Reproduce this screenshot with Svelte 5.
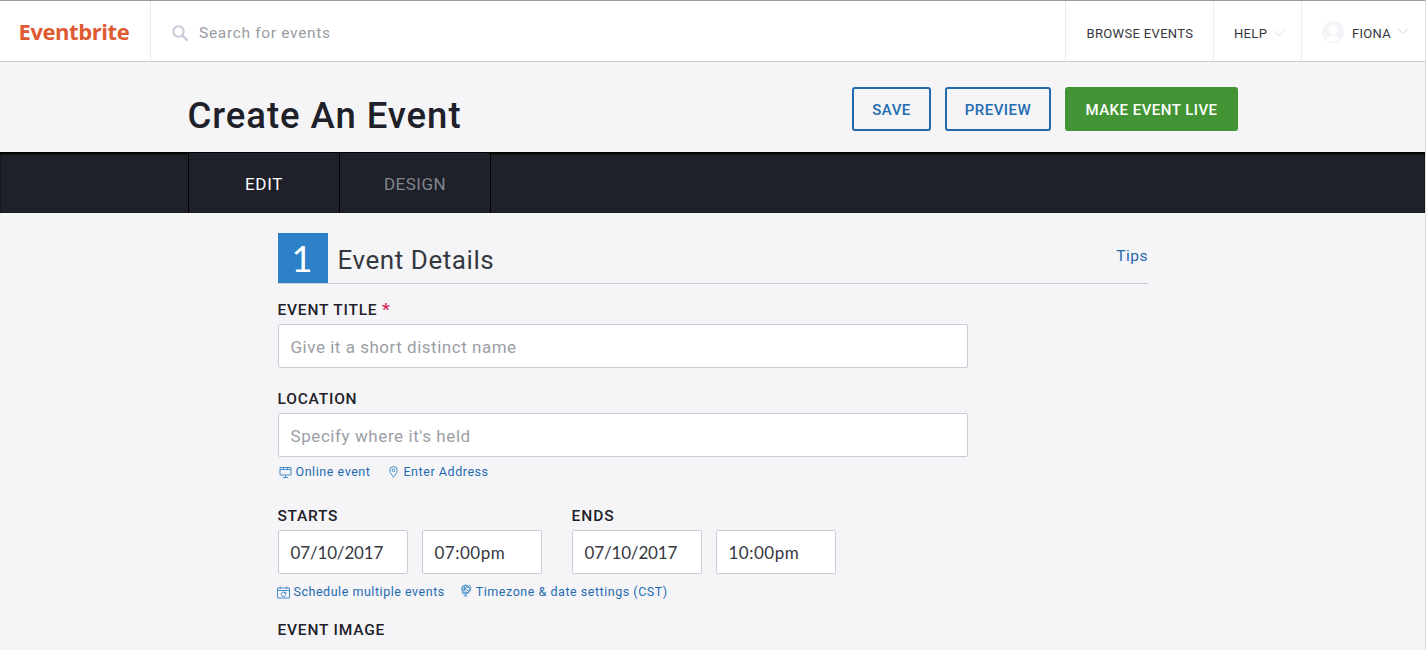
<script>
  const dates = [
    { label: 'STARTS', date: '07/10/2017', time: '07:00pm', cls: 'starts' },
    { label: 'ENDS', date: '07/10/2017', time: '10:00pm', cls: 'ends' }
  ];
</script>

<div class="page">
  <header class="topbar">
    <a class="logo" href="#home">Eventbrite</a>
    <div class="search">
      <svg width="17" height="17" viewBox="0 0 17 17" fill="none" stroke="#c9cbd9">
        <circle cx="6.5" cy="6.5" r="5.2" stroke-width="2" />
        <path d="M10.4 10.4 15.6 15.6" stroke-width="2.5" />
      </svg>
      <span>Search for events</span>
    </div>
    <a class="item browse" href="#browse"><span>BROWSE EVENTS</span></a>
    <a class="item help" href="#help">
      <span>HELP</span>
      <svg class="chev" width="12" height="7" viewBox="0 0 12 7"><path d="M1 .7 6 5.7 11 .7" /></svg>
    </a>
    <a class="item user" href="#account">
      <svg class="avatar" width="22" height="22" viewBox="0 0 22 22">
        <circle cx="11" cy="11" r="11" fill="#f4f4f8" />
        <ellipse cx="11" cy="8.8" rx="4.2" ry="4.8" fill="#fff" />
        <path d="M4.5 18.6C5.5 15.6 8 15 11 15s5.5.6 6.5 3.6C15.5 20.3 13.5 20.9 11 20.9s-4.5-.6-6.5-2.3Z" fill="#fff" />
      </svg>
      <span>FIONA</span>
      <svg class="chev" width="12" height="7" viewBox="0 0 12 7"><path d="M1 .7 6 5.7 11 .7" /></svg>
    </a>
  </header>

  <section class="title">
    <h1>Create An Event</h1>
    <button class="outline save">SAVE</button>
    <button class="outline preview">PREVIEW</button>
    <button class="live">MAKE EVENT LIVE</button>
  </section>

  <nav>
    <a class="edit" href="#edit">EDIT</a>
    <a class="design" href="#design">DESIGN</a>
  </nav>

  <main>
    <div class="heading">
      <span class="step">1</span>
      <h2>Event Details</h2>
      <a class="tips" href="#tips">Tips</a>
    </div>

    <div class="label first">EVENT TITLE <b>*</b></div>
    <div class="input wide">Give it a short distinct name</div>

    <div class="label location">LOCATION</div>
    <div class="input wide where">Specify where it's held</div>
    <div class="links">
      <a class="online" href="#online">
        <svg width="13" height="12" viewBox="0 0 13 12"><path d="M1 1.5h11v7.500H1zM1 3.500h11M6.500 9v2.500M4 11.500h5M4.500 1.500v2M8.500 1.500v2" /></svg>
        <span>Online event</span>
      </a>
      <a class="address" href="#address">
        <svg width="9" height="12" viewBox="0 0 9 12"><path d="M4.500 11.300C3.500 9.200.8 7.200.8 4.300a3.700 3.700 0 0 1 7.400 0c0 2.900-2.700 4.900-3.700 7Z" /><circle cx="4.500" cy="4.300" r="1.400" /></svg>
        <span>Enter Address</span>
      </a>
    </div>

    <div class="dates">
      {#each dates as d}
        <div>
          <div class="label {d.cls}">{d.label}</div>
          <div class="pair">
            <div class="input value date">{d.date}</div>
            <div class="input value time">{d.time}</div>
          </div>
        </div>
      {/each}
    </div>
    <div class="links when">
      <a class="schedule" href="#schedule">
        <svg width="13" height="13" viewBox="0 0 13 13"><path d="M.5 2h12v10H.5zM.5 4.500h12M3.200.5v2.500M9.800.5v2.500" /><path d="M8.600 7.300A2.300 2.300 0 1 0 8.700 9.200M8.900 5.900v1.700H7.200" /></svg>
        <span>Schedule multiple events</span>
      </a>
      <a class="zone" href="#timezone">
        <svg width="12" height="13" viewBox="0 0 12 13"><circle cx="5.500" cy="5" r="4" /><path d="M2.500 2.500 8.600 7.200M3.500 7.500C4.300 4.500 6 3 8.800 3M5.500 1.300C3.500 4 4 6.500 6.500 8.500M2 5.500c2 0 4.500-1.500 5-3.500M9.300.8c2 2.300 2 5.500-.3 7.700-1.900 1.700-5 1.900-7.300.2M5.500 9.800v1.800M3.700 12h3.600" /></svg>
        <span>Timezone &amp; date settings (CST)</span>
      </a>
    </div>

    <div class="label image">EVENT IMAGE</div>
  </main>
</div>

<style>
  :global(body) { margin: 0; background: #f5f5f8; }
  .page { box-sizing: border-box; height: 650px; overflow: hidden; border-top: 1px solid #9c9c9c; border-right: 1px solid #dcdcdf; background: #f5f5f8; font-family: Roboto, sans-serif; color: #1e2129; }
  a { text-decoration: none; }
  svg { flex: none; }
  .topbar { display: flex; height: 60px; background: #fff; border-bottom: 1px solid #c9cbd6; }
  .logo { box-sizing: border-box; width: 151px; padding-left: 18.5px; border-right: 1px solid #ebebf0; font: 700 22px/60px "Open Sans", sans-serif; letter-spacing: -.42px; color: #de5a33; }
  .search { flex: 1; display: flex; align-items: center; gap: 10px; padding: 4px 0 0 21px; font-size: 15.5px; letter-spacing: .68px; color: #9a9ba3; }
  .item { box-sizing: border-box; display: flex; align-items: center; padding: 4px 0 0 20px; border-left: 1px solid #ebebf0; font-size: 13px; color: #35373e; }
  .browse { width: 148px; padding-left: 20.5px; letter-spacing: .34px; }
  .help { width: 88px; letter-spacing: .35px; }
  .user { width: 124px; letter-spacing: .3px; }
  .user span { margin-left: 8px; }
  .chev { margin-left: 6px; fill: none; stroke: #d6d7e1; }
  .user .chev { margin-bottom: 4px; }
  .avatar { margin-bottom: 3px; }

  .title { display: flex; height: 65px; padding: 25px 187px 0 187.5px; }
  h1 { flex: 1; margin: 0; font-size: 36.5px; font-weight: 500; line-height: 57px; letter-spacing: .95px; }
  button { box-sizing: border-box; height: 44px; margin: 0 0 0 14px; padding: 2px 0 0; border-radius: 3px; font: 500 15px/20px Roboto, sans-serif; }
  .outline { border: 2px solid #2268aa; background: none; color: #226bb0; }
  .save { width: 79px; letter-spacing: .45px; }
  .preview { width: 106px; letter-spacing: .5px; }
  .live { width: 173px; border: 0; background: #439434; color: #fff; letter-spacing: .48px; }

  nav { display: flex; height: 60px; padding-left: 188px; border-top: 1px solid #000; background: #1e2129; box-shadow: inset 0 1px 2px #000; }
  nav a { box-sizing: border-box; height: 60px; width: 151px; border-right: 1px solid #000; background: #1e2129; line-height: 62px; text-align: center; font-size: 17px; font-weight: 400; }
  nav .edit { width: 152px; border-left: 1px solid #000; color: #fff; letter-spacing: .7px; }
  .design { color: #82858e; letter-spacing: .5px; }

  main { width: 870px; padding: 20px 0 0 278px; }
  .heading { display: flex; height: 50px; border-bottom: 1px solid #c9cbd9; }
  .step { box-sizing: border-box; width: 50px; height: 50px; padding-right: 2px; background: #2d81c9; color: #fff; text-align: center; font: 400 36px/50px Lato, sans-serif; }
  h2 { flex: 1; margin: 0 0 0 9.5px; font-size: 26px; font-weight: 400; line-height: 54px; letter-spacing: .56px; color: #36383f; }
  .tips { font-size: 15.5px; line-height: 47px; letter-spacing: .5px; color: #2168ab; }
  .label { font-size: 15.5px; font-weight: 500; line-height: 20px; letter-spacing: .8px; margin-left: -.5px; }
  .label b { font-size: 17px; font-weight: 700; line-height: 1px; color: #dc2a5a; }
  .first { margin-top: 16px; }
  .location { margin-top: 21px; }
  .starts { letter-spacing: .7px; }
  .ends { letter-spacing: 1px; }
  .input { box-sizing: border-box; height: 44px; margin-top: 4px; padding: 1px 0 0 11.5px; border: 1px solid #c9cbd6; border-radius: 2px; background: #fff; font-size: 17px; line-height: 42px; letter-spacing: .52px; color: #9d9ea6; }
  .wide { width: 690px; }
  .where { letter-spacing: .58px; }
  .value { font-family: Lato, sans-serif; letter-spacing: -.15px; color: #36383f; }
  .date { width: 130px; }
  .time { width: 120px; letter-spacing: .5px; }
  .links { display: flex; height: 18px; padding: 5px 0 2px; font-size: 12.5px; letter-spacing: .55px; color: #226bb0; }
  .links a { display: flex; align-items: center; color: inherit; }
  .links svg { position: relative; top: 1px; fill: none; stroke: #3484c2; stroke-width: .9; }
  .online { margin-left: 1px; gap: 3.5px; }
  .address { margin-left: 18.5px; gap: 5.5px; }
  .dates { display: flex; gap: 30px; margin-top: 24px; }
  .pair { display: flex; gap: 14px; }
  .when { padding-top: 8px; letter-spacing: .53px; }
  .schedule { gap: 3.5px; margin-left: -1px; }
  .zone { gap: 4px; margin-left: 15px; }
  .links .zone svg { top: -1px; }
  .image { margin-top: 18px; }
</style>
